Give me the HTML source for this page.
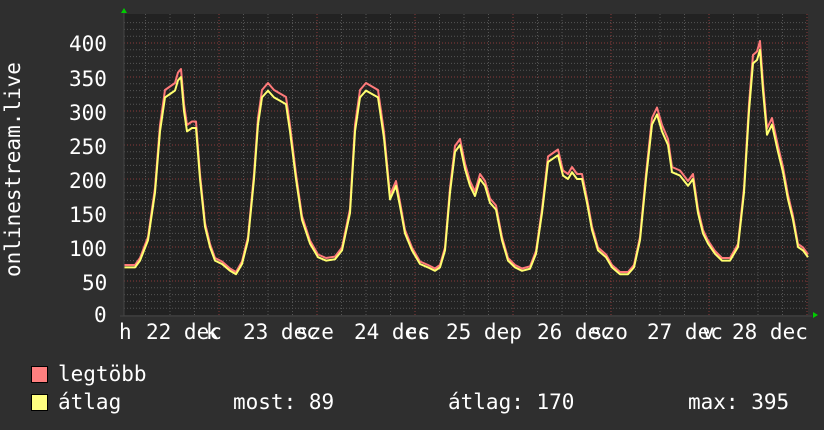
<!DOCTYPE html>
<html><head><meta charset="utf-8"><style>
body{margin:0;width:824px;height:430px;background:#2f2f2f;overflow:hidden;position:relative;font-family:"DejaVu Sans Mono","Liberation Mono",monospace;color:#fff}
.t{position:absolute;font-size:21px;line-height:21px;white-space:pre}
.sw{position:absolute;width:15px;height:15px;border:1px solid #000}
</style></head><body>
<svg width="824" height="430" style="position:absolute;left:0;top:0">
<rect x="124" y="14" width="684" height="301" fill="#222"/>
<g id="grid"></g>
<polyline id="red" fill="none" stroke="#ff7a7a" stroke-width="2" stroke-linejoin="round"/>
<polyline id="yel" fill="none" stroke="#ffff70" stroke-width="2" stroke-linejoin="round"/>
<line x1="124" y1="12" x2="124" y2="316" stroke="#444" stroke-width="1"/>
<line x1="120" y1="316" x2="812" y2="316" stroke="#444" stroke-width="1"/>
<polygon points="121,13 127,13 124,8" fill="#0c0"/>
<polygon points="813,312 813,318 818,315" fill="#0c0"/>
</svg>
<div class="t" style="left:69px;top:34px">400</div>
<div class="t" style="left:69px;top:69px">350</div>
<div class="t" style="left:69px;top:103px">300</div>
<div class="t" style="left:69px;top:137px">250</div>
<div class="t" style="left:69px;top:171px">200</div>
<div class="t" style="left:69px;top:205px">150</div>
<div class="t" style="left:69px;top:239px">100</div>
<div class="t" style="left:82px;top:273px">50</div>
<div class="t" style="left:94px;top:305px">0</div>
<div class="t" style="left:3px;transform:rotate(-90deg);transform-origin:0 0;top:277px">onlinestream.live</div>
<div class="t" style="left:119px;top:322px">h</div>
<div class="t" style="left:146px;top:322px">22 dec</div>
<div class="t" style="left:206px;top:322px">k</div>
<div class="t" style="left:243px;top:322px">23 dec</div>
<div class="t" style="left:296px;top:322px">sze</div>
<div class="t" style="left:354px;top:322px">24 dec</div>
<div class="t" style="left:405px;top:322px">cs</div>
<div class="t" style="left:446px;top:322px">25 dep</div>
<div class="t" style="left:537px;top:322px">26 dec</div>
<div class="t" style="left:590px;top:322px">szo</div>
<div class="t" style="left:647px;top:322px">27 dec</div>
<div class="t" style="left:702px;top:322px">v</div>
<div class="t" style="left:732px;top:322px">28 dec</div>
<div class="sw" style="left:31px;top:366px;background:#ff7f7f"></div>
<div class="t" style="left:58px;top:364px">legtöbb</div>
<div class="sw" style="left:31px;top:394px;background:#ffff7f"></div>
<div class="t" style="left:58px;top:392px">átlag</div>
<div class="t" style="left:233px;top:392px">most: 89</div>
<div class="t" style="left:448px;top:392px">átlag: 170</div>
<div class="t" style="left:688px;top:392px">max: 395</div>
<script>
var g=document.getElementById('grid'),s='';
for(var v=10;v<=430;v+=10){var y=315-v*0.68;if(y<14)break;var maj=v%50==0;
s+='<line x1="124" x2="808" y1="'+y+'" y2="'+y+'" stroke="'+(maj?'#8a3a3a':'#555')+'" stroke-dasharray="1,2"/>';}
for(var x=121;x<808;x+=24.5){var k=Math.round((x-121)/24.5);var maj=(k%4==0);if(x<125)continue;
s+='<line y1="14" y2="315" x1="'+x+'" x2="'+x+'" stroke="'+(maj?'#8a3a3a':'#555')+'" stroke-dasharray="1,2"/>';}
g.innerHTML=s;
var d=[124,70,135,70,140,80,148,110,155,180,160,270,165,320,170,325,175,330,178,345,181,350,184,300,187,270,192,275,196,275,200,200,205,130,210,100,215,80,222,75,230,65,236,60,242,75,248,110,254,200,258,280,262,320,268,330,274,320,280,315,286,310,290,270,296,200,302,140,310,105,318,85,326,80,335,82,342,95,350,150,355,270,360,320,366,330,372,325,378,320,384,260,390,170,396,190,400,160,405,120,412,95,420,75,428,70,435,65,440,70,445,95,450,180,455,240,460,250,465,215,470,190,475,175,480,200,485,190,490,165,496,155,502,110,508,80,515,70,522,65,530,68,536,90,542,150,548,225,553,230,558,235,563,205,568,200,572,210,577,200,582,200,587,165,592,125,598,95,606,85,612,70,620,60,628,60,634,70,640,110,646,200,652,280,657,295,662,270,668,250,672,210,680,205,688,190,693,200,698,150,703,120,708,105,715,90,722,80,730,80,738,100,744,180,749,300,753,370,757,375,760,390,763,330,767,265,772,280,778,240,783,210,788,170,793,140,798,100,803,95,808,85];
var py='',pr='';
for(var i=0;i<d.length;i+=2){var y=315-d[i+1]*0.68;py+=d[i]+','+y+' ';pr+=d[i]+','+(y-d[i+1]*0.02-1)+' ';}
document.getElementById('yel').setAttribute('points',py);
document.getElementById('red').setAttribute('points',pr);
</script>
</body></html>
